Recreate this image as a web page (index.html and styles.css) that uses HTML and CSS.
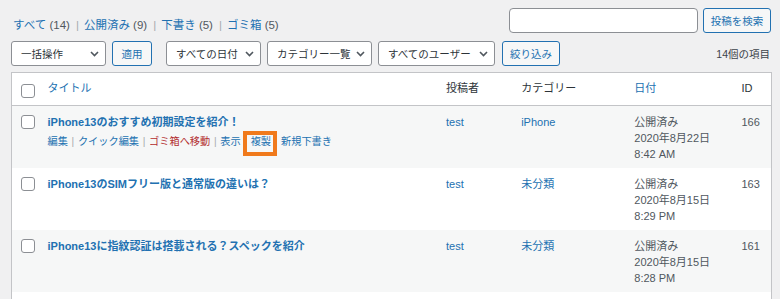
FILE: index.html
```html
<!DOCTYPE html>
<html lang="ja">

<head>
  <meta charset="UTF-8" />
  <meta name="viewport" content="width=device-width, initial-scale=1.0" />
  <title>投稿一覧</title>

  <link rel="stylesheet" href="styles.css">
</head>

<body>

  <div class="wrap">

    <div class="top-row">
      <ul class="subsubsub">
        <li><a href="#">すべて</a> <span class="count">(14)</span><span class="sep">|</span></li>
        <li><a href="#">公開済み</a> <span class="count">(9)</span><span class="sep">|</span></li>
        <li><a href="#">下書き</a> <span class="count">(5)</span><span class="sep">|</span></li>
        <li><a href="#">ゴミ箱</a> <span class="count">(5)</span></li>
      </ul>

      <div class="search-box">
        <input type="search" class="search-input">
        <button class="btn">投稿を検索</button>
      </div>
    </div>

    <div class="tablenav">
      <div class="select select-bulk">
        <span>一括操作</span>
        <svg width="9" height="6" viewBox="0 0 9 6"><path d="M1 1l3.5 3.5L8 1" fill="none" stroke="#50575e" stroke-width="1.6"/></svg>
      </div>
      <button class="btn btn-apply">適用</button>

      <div class="select select-date">
        <span>すべての日付</span>
        <svg width="9" height="6" viewBox="0 0 9 6"><path d="M1 1l3.5 3.5L8 1" fill="none" stroke="#50575e" stroke-width="1.6"/></svg>
      </div>
      <div class="select select-cat">
        <span>カテゴリー一覧</span>
        <svg width="9" height="6" viewBox="0 0 9 6"><path d="M1 1l3.5 3.5L8 1" fill="none" stroke="#50575e" stroke-width="1.6"/></svg>
      </div>
      <div class="select select-user">
        <span>すべてのユーザー</span>
        <svg width="9" height="6" viewBox="0 0 9 6"><path d="M1 1l3.5 3.5L8 1" fill="none" stroke="#50575e" stroke-width="1.6"/></svg>
      </div>
      <button class="btn btn-filter">絞り込み</button>

      <span class="displaying-num">14個の項目</span>
    </div>

    <table class="posts">
      <colgroup>
        <col class="col-check">
        <col class="col-title">
        <col class="col-author">
        <col class="col-cat">
        <col class="col-date">
        <col class="col-id">
      </colgroup>
      <thead>
        <tr>
          <th class="check"><span class="checkbox"></span></th>
          <th><a href="#">タイトル</a></th>
          <th>投稿者</th>
          <th>カテゴリー</th>
          <th><a href="#">日付</a></th>
          <th>ID</th>
        </tr>
      </thead>
      <tbody>
        <tr class="alt">
          <td class="check"><span class="checkbox"></span></td>
          <td>
            <a href="#" class="row-title">iPhone13のおすすめ初期設定を紹介！</a>
            <div class="row-actions">
              <a href="#">編集</a><span class="sep">|</span><a href="#">クイック編集</a><span class="sep">|</span><a href="#" class="trash">ゴミ箱へ移動</a><span class="sep">|</span><a href="#">表示</a><span class="sep">|</span><a href="#" class="marked">複製</a><span class="sep">|</span><a href="#">新規下書き</a>
            </div>
          </td>
          <td><a href="#">test</a></td>
          <td><a href="#">iPhone</a></td>
          <td class="date">公開済み<br>2020年8月22日<br>8:42 AM</td>
          <td class="id">166</td>
        </tr>
        <tr>
          <td class="check"><span class="checkbox"></span></td>
          <td><a href="#" class="row-title">iPhone13のSIMフリー版と通常版の違いは？</a></td>
          <td><a href="#">test</a></td>
          <td><a href="#">未分類</a></td>
          <td class="date">公開済み<br>2020年8月15日<br>8:29 PM</td>
          <td class="id">163</td>
        </tr>
        <tr class="alt">
          <td class="check"><span class="checkbox"></span></td>
          <td><a href="#" class="row-title">iPhone13に指紋認証は搭載される？スペックを紹介</a></td>
          <td><a href="#">test</a></td>
          <td><a href="#">未分類</a></td>
          <td class="date">公開済み<br>2020年8月15日<br>8:28 PM</td>
          <td class="id">161</td>
        </tr>
        <tr class="empty">
          <td colspan="6"></td>
        </tr>
      </tbody>
    </table>

  </div>

</body>

</html>
```

FILE: styles.css
```css
body {
  margin: 0;
  background: #f0f0f1;
  color: #2c3338;
  font-family: "Liberation Sans", "Noto Sans CJK JP", sans-serif;
  font-size: 11px;
  overflow: hidden;
}

a {
  color: #2271b1;
  text-decoration: none;
}

.wrap {
  padding: 8px 8px 0 11px;
}

/* top row: status links + search */
.top-row {
  display: flex;
  justify-content: space-between;
  align-items: flex-start;
  height: 25px;
}

.subsubsub {
  list-style: none;
  margin: 9px 0 0;
  padding: 0 0 0 2px;
  display: flex;
  font-size: 11.5px;
  line-height: 17px;
  color: #50575e;
}

.subsubsub .sep {
  color: #a7aaad;
  margin: 0 5px 0 6px;
}

.search-box {
  display: flex;
  gap: 5px;
  margin-right: 1px;
}

.search-input {
  width: 189px;
  height: 25px;
  box-sizing: border-box;
  border: 1px solid #8c8f94;
  border-radius: 4px;
  background: white;
  margin: 0;
}

.btn {
  box-sizing: border-box;
  height: 25px;
  border: 1px solid #2271b1;
  border-radius: 3px;
  background: #f6f7f7;
  color: #2271b1;
  font-family: inherit;
  font-size: 10.5px;
  padding: 0;
  margin: 0;
  white-space: nowrap;
}

.search-box .btn {
  width: 68px;
}

/* filters bar */
.tablenav {
  display: flex;
  align-items: center;
  height: 25px;
  margin: 8px 0 6px;
}

.select {
  box-sizing: border-box;
  height: 25px;
  display: flex;
  align-items: center;
  justify-content: space-between;
  padding: 0 6px 0 9px;
  border: 1px solid #8c8f94;
  border-radius: 3px;
  background: white;
  color: #2c3338;
  font-size: 10.5px;
  white-space: nowrap;
}

.select svg {
  flex: none;
  margin-left: 5px;
}

.select-bulk {
  width: 95px;
}

.select-date {
  width: 95px;
  margin-left: 14px;
}

.select-cat {
  width: 105px;
  margin-left: 6px;
}

.select-user {
  width: 117px;
  margin-left: 6px;
}

.btn-apply {
  width: 40px;
  margin-left: 6px;
}

.btn-filter {
  width: 58px;
  margin-left: 7px;
}

.displaying-num {
  margin-left: auto;
  margin-right: 2px;
  font-size: 10.5px;
  color: #3c434a;
}

/* posts table */
.posts {
  width: 761px;
  table-layout: fixed;
  border-collapse: collapse;
  background: white;
  border: 1px solid #c3c4c7;
}

.col-check { width: 28px; }
.col-title { width: 398px; }
.col-author { width: 75px; }
.col-cat { width: 113px; }
.col-date { width: 107px; }
.col-id { width: 38px; }

.posts th,
.posts td {
  text-align: left;
  vertical-align: top;
  line-height: 16px;
  padding: 8px 8px 6px;
}

.posts th {
  font-weight: normal;
  padding: 7px 8px;
  color: #2c3338;
  border-bottom: 1px solid #c3c4c7;
}

.posts tr.alt td {
  background: #f6f7f7;
}

.posts tr.empty td {
  height: 48px;
}

.posts .check {
  padding-left: 9px;
  padding-right: 0;
}

.checkbox {
  display: block;
  width: 14px;
  height: 14px;
  box-sizing: border-box;
  border: 1px solid #8c8f94;
  border-radius: 3px;
  background: white;
  margin-top: 1px;
}

.posts th .checkbox {
  margin-top: 4px;
}

.row-title {
  font-weight: 600;
}

.row-actions {
  margin-top: 4px;
  font-size: 10.2px;
  white-space: nowrap;
}

.row-actions .sep {
  color: #a7aaad;
  margin: 0 3.7px;
}

.row-actions .trash {
  color: #b32d2e;
}

.marked {
  position: relative;
}

.marked::after {
  content: "";
  position: absolute;
  left: -8px;
  top: -5px;
  width: 34px;
  height: 25px;
  box-sizing: border-box;
  border: 4px solid #f07a1c;
}

.date,
.id {
  color: #50575e;
}
```
